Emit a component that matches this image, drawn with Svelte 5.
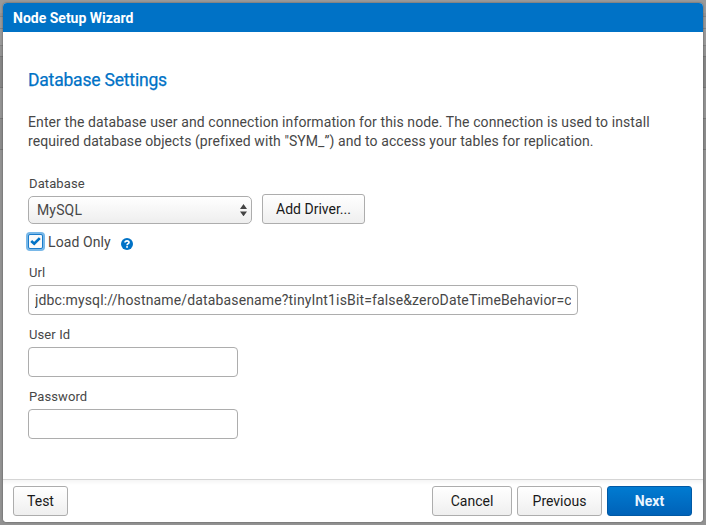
<script>
  let loadOnly = $state(true);
  let url = $state('jdbc:mysql://hostname/databasename?tinyInt1isBit=false&zeroDateTimeBehavior=convertToNull');
  let userId = $state('');
  let password = $state('');
</script>

<div class="backdrop">
  <div class="window">
    <header>Node Setup Wizard</header>
    <main>
      <h1>Database Settings</h1>
      <p>
        <span class="line">Enter the database user and connection information for this node. The connection is used to install</span>
        <span class="line second">required database objects (prefixed with "SYM_”) and to access your tables for replication.</span>
      </p>

      <div class="caption">Database</div>
      <div class="row">
        <div class="select">
          <span>MySQL</span>
          <svg width="7" height="12" viewBox="0 0 7 12"><path d="M0 5 3.5 0 7 5ZM0 7.5h7L3.5 12.3Z" fill="#444" /></svg>
        </div>
        <button class="driver"><span>Add Driver...</span></button>
      </div>

      <div class="check">
        <button class="box" aria-label="Load Only" onclick={() => (loadOnly = !loadOnly)}>
          {#if loadOnly}
            <svg width="11" height="9" viewBox="0 0 11 9"><path d="M1.2 3.9 4.2 6.7 9.8 1.1" fill="none" stroke="#0072c6" stroke-width="2.7" /></svg>
          {/if}
        </button>
        <span class="checklabel">Load Only</span>
        <svg class="help" width="12" height="12" viewBox="0 0 12 12">
          <circle cx="6" cy="6" r="6" fill="#0072c6" />
          <path d="M4 4.5C4.1 2.3 8 2.3 8 4.4 8 5.7 6.1 5.7 6.1 7.2" fill="none" stroke="#fff" stroke-width="1.7" />
          <rect x="5.2" y="8.1" width="1.7" height="1.7" fill="#fff" />
        </svg>
      </div>

      <label class="caption urlcaption" for="url">Url</label>
      <input id="url" class="wide" bind:value={url} />
      <label class="caption" for="user">User Id</label>
      <input id="user" bind:value={userId} />
      <label class="caption" for="pass">Password</label>
      <input id="pass" type="password" bind:value={password} />
    </main>
    <footer>
      <button class="test"><span>Test</span></button>
      <div class="gap"></div>
      <button class="cancel"><span>Cancel</span></button>
      <button class="previous"><span>Previous</span></button>
      <button class="next"><span>Next</span></button>
    </footer>
  </div>
</div>

<style>
  .backdrop {
    box-sizing: border-box;
    width: 706px;
    height: 525px;
    padding: 3px;
    overflow: hidden;
    background: linear-gradient(#999 0 13px, #929292 13px 16px, #828282 16px 17px, #999 17px 28px, #828282 28px 29px, #999 29px 45px, #828282 45px 46px, #929292 46px 56px, #777 56px 57px, #868686 57px 87px, #777 87px 88px, #949494 88px 118px, #777 118px 119px, #8b8b8b 119px 149px, #777 149px 150px, #929292 150px);
    font-family: Roboto, sans-serif;
    font-size: 14px;
    color: #474747;
  }
  .window {
    display: flex;
    flex-direction: column;
    width: 700px;
    height: 519px;
    overflow: hidden;
    border-radius: 4px;
    background: #fff;
    box-shadow: 0 0 2px rgba(0, 0, 0, 0.5);
  }
  header {
    flex: none;
    height: 29px;
    padding-left: 10px;
    background: #0072c6;
    color: #fff;
    font-weight: 700;
    line-height: 30px;
  }
  main {
    flex: 1;
    display: flex;
    flex-direction: column;
    padding: 0 25px;
  }
  h1 {
    margin: 36px 0 0;
    font-size: 17.5px;
    font-weight: 400;
    line-height: 24px;
    letter-spacing: -0.19px;
    color: #0072c6;
    -webkit-text-stroke: 0.25px #0072c6;
  }
  p {
    margin: 21px 0 0;
    line-height: 19px;
    letter-spacing: 0.095px;
    white-space: nowrap;
  }
  .line { display: block; }
  .second { letter-spacing: 0.075px; }
  .caption {
    height: 18px;
    padding-left: 1px;
    font-size: 13px;
    line-height: 18px;
    letter-spacing: 0.1px;
    margin-top: 11px;
  }
  p + .caption { margin-top: 24px; }
  .urlcaption { margin-top: 12px; }
  .row {
    display: flex;
    align-items: flex-end;
    gap: 10px;
    margin-top: 1px;
  }
  .select {
    box-sizing: border-box;
    display: flex;
    align-items: center;
    justify-content: space-between;
    width: 224px;
    height: 28px;
    padding: 0 4px 0 8px;
    border: 1px solid #adadad;
    border-radius: 5px;
    background: linear-gradient(#fff, #eee);
    letter-spacing: 0.15px;
  }
  button {
    box-sizing: border-box;
    flex: none;
    height: 30px;
    padding: 0;
    border: 1px solid #adadad;
    border-radius: 3px;
    background: linear-gradient(#fff, #efefef);
    font: 14px/28px Roboto, sans-serif;
    color: #191919;
  }
  .driver { width: 103px; }
  .check {
    display: flex;
    align-items: center;
    height: 20px;
    margin-top: 8px;
  }
  .box {
    display: flex;
    align-items: center;
    justify-content: center;
    width: 15px;
    height: 15px;
    margin-top: -1px;
    border: 1px solid #1a7ccb;
    border-radius: 2px;
    background: #fafafa;
    box-shadow: 0 0 0 2px #79b8e8;
  }
  .checklabel {
    margin-left: 5px;
    letter-spacing: 0.1px;
  }
  .help { margin: 4px 0 0 10px; }
  input {
    box-sizing: border-box;
    width: 210px;
    height: 30px;
    margin: 3px 0 0;
    padding: 0 6px;
    border: 1px solid #adadad;
    border-radius: 4px;
    outline: 0;
    background: #fff;
    font: 14px Roboto, sans-serif;
    letter-spacing: 0.145px;
    color: #474747;
  }
  .wide { width: 550px; }
  footer {
    flex: none;
    display: flex;
    gap: 5px;
    box-sizing: border-box;
    height: 43px;
    padding: 6px 11px 0 10px;
    border-top: 1px solid #d5d5d5;
    background: linear-gradient(#f5f5f5, #fff 5px);
  }
  .gap { flex: 1; }
  .test { width: 55px; }
  .cancel { width: 80px; }
  .previous { width: 85px; }
  .next {
    width: 85px;
    border-color: #0059a5;
    background: linear-gradient(#007bd1, #0062b8);
    color: #eaf5ff;
    font-weight: 700;
  }
</style>
